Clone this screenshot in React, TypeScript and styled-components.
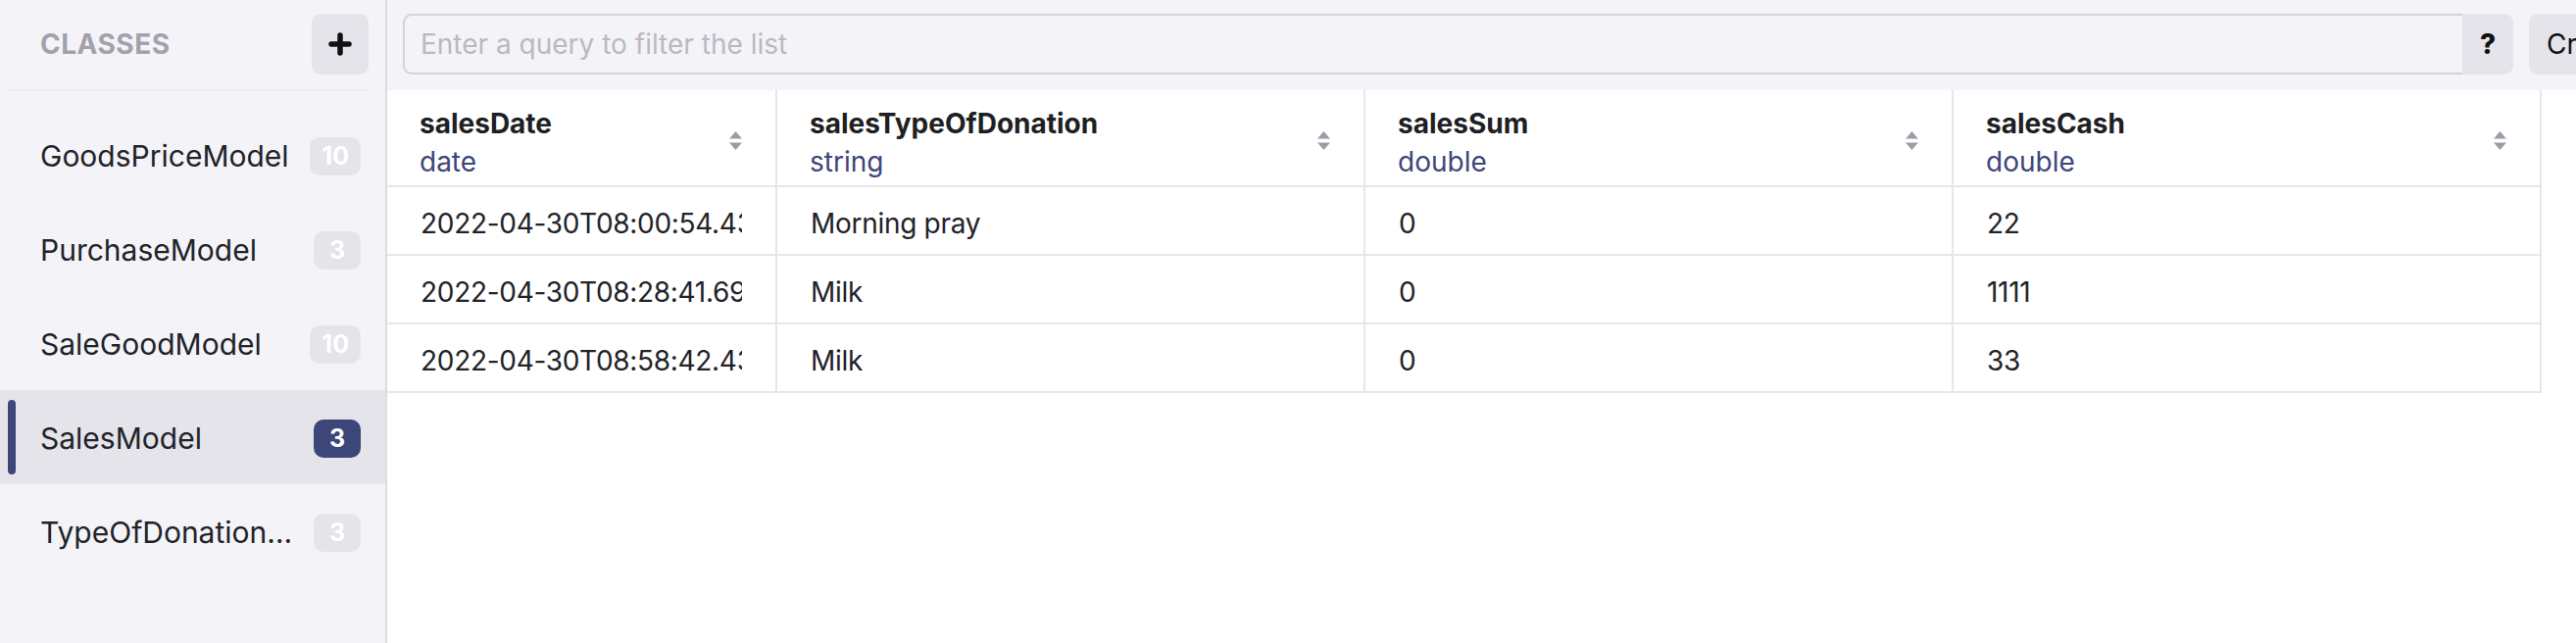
import React from 'react';
import styled, { createGlobalStyle } from 'styled-components';

const GlobalStyle = createGlobalStyle`
    html, body {
        margin: 0;
        padding: 0;
        background: #ffffff;
    }
    * {
        box-sizing: border-box;
    }
`;

const classes = [
    { name: 'GoodsPriceModel', count: 10 },
    { name: 'PurchaseModel', count: 3 },
    { name: 'SaleGoodModel', count: 10 },
    { name: 'SalesModel', count: 3, active: true },
    { name: 'TypeOfDonationModel', count: 3 },
];

const columns = [
    { name: 'salesDate', type: 'date' },
    { name: 'salesTypeOfDonation', type: 'string' },
    { name: 'salesSum', type: 'double' },
    { name: 'salesCash', type: 'double' },
];

const rows = [
    ['2022-04-30T08:00:54.432Z', 'Morning pray', '0', '22'],
    ['2022-04-30T08:28:41.695Z', 'Milk', '0', '1111'],
    ['2022-04-30T08:58:42.432Z', 'Milk', '0', '33'],
];

const SortIcon = () => (
    <svg width="15" height="21" viewBox="0 0 15 21">
        <path d="M7.5 1 L14 8.5 L1 8.5 Z" fill="#9c9ca8" />
        <path d="M1 12.5 L14 12.5 L7.5 20 Z" fill="#9c9ca8" />
    </svg>
);

const PlusIcon = () => (
    <svg width="24" height="24" viewBox="0 0 24 24">
        <path d="M12 3 V21 M3 12 H21" stroke="#111" strokeWidth="5.5" strokeLinecap="round" />
    </svg>
);

const App = () => {
    return (
        <>
            <GlobalStyle />
            <Page>
                <Sidebar>
                    <SidebarHeader>
                        <SidebarTitle>Classes</SidebarTitle>
                        <AddButton><PlusIcon /></AddButton>
                    </SidebarHeader>
                    <ClassList>
                        {classes.map((c) => (
                            <ClassRow key={c.name} $active={!!c.active}>
                                <Indicator $active={!!c.active} />
                                <ClassName>{c.name}</ClassName>
                                <Count $active={!!c.active}>{c.count}</Count>
                            </ClassRow>
                        ))}
                    </ClassList>
                </Sidebar>
                <Main>
                    <Toolbar>
                        <SearchGroup>
                            <SearchInput placeholder="Enter a query to filter the list" />
                            <HelpButton>?</HelpButton>
                        </SearchGroup>
                        <CreateButton>Create a class</CreateButton>
                    </Toolbar>
                    <Table>
                        {columns.map((col) => (
                            <HeadCell key={col.name}>
                                <HeadText>
                                    <ColName>{col.name}</ColName>
                                    <ColType>{col.type}</ColType>
                                </HeadText>
                                <SortIcon />
                            </HeadCell>
                        ))}
                        {rows.map((row, i) =>
                            row.map((value, j) => (
                                <Cell key={`${i}-${j}`}>
                                    <CellText>{value}</CellText>
                                </Cell>
                            ))
                        )}
                    </Table>
                </Main>
            </Page>
        </>
    );
};

export default App;

const Page = styled.div`
    display: flex;
    width: 100vw;
    height: 100vh;
    overflow: hidden;
    font-family: Inter, "Liberation Sans", sans-serif;
    color: #212329;
`;

const Sidebar = styled.aside`
    width: 395px;
    flex-shrink: 0;
    background: #f4f4f8;
    border-right: 2px solid #dcdce2;
    display: flex;
    flex-direction: column;
`;

const SidebarHeader = styled.div`
    height: 93px;
    margin: 0 17px 0 8px;
    padding: 14px 0 0 33px;
    display: flex;
    justify-content: space-between;
    align-items: flex-start;
    border-bottom: 2px solid #e9e9ee;
`;

const SidebarTitle = styled.div`
    font-size: 28px;
    font-weight: 700;
    letter-spacing: 0.5px;
    text-transform: uppercase;
    color: #a2a2ac;
    line-height: 62px;
`;

const AddButton = styled.div`
    width: 58px;
    height: 62px;
    border-radius: 9px;
    background: #e4e4ea;
    display: flex;
    align-items: center;
    justify-content: center;
`;

const ClassList = styled.div`
    display: flex;
    flex-direction: column;
    padding-top: 17px;
`;

const ClassRow = styled.div<{ $active: boolean }>`
    height: 96px;
    display: flex;
    align-items: center;
    padding: 2px 25px 0 8px;
    gap: 14px;
    background: ${(p) => (p.$active ? '#e4e4ea' : 'transparent')};
`;

const Indicator = styled.div<{ $active: boolean }>`
    width: 8px;
    align-self: stretch;
    margin: 8px 11px 10px 0;
    border-radius: 4px;
    flex-shrink: 0;
    background: ${(p) => (p.$active ? '#3d4679' : 'transparent')};
`;

const ClassName = styled.div`
    flex: 1;
    min-width: 0;
    font-size: 30px;
    white-space: nowrap;
    overflow: hidden;
    text-overflow: ellipsis;
    color: #212329;
`;

const Count = styled.div<{ $active: boolean }>`
    flex-shrink: 0;
    min-width: 48px;
    height: 39px;
    padding: 0 12px;
    border-radius: 10px;
    display: flex;
    align-items: center;
    justify-content: center;
    font-size: 25px;
    font-weight: 700;
    color: #ffffff;
    background: ${(p) => (p.$active ? '#3d4679' : '#e4e4ea')};
`;

const Main = styled.main`
    flex: 1;
    min-width: 0;
    display: flex;
    flex-direction: column;
    overflow: hidden;
    background: #ffffff;
`;

const Toolbar = styled.div`
    height: 92px;
    flex-shrink: 0;
    background: #f4f4f8;
    padding: 14px 0 0 16px;
    display: flex;
    align-items: flex-start;
    gap: 16px;
`;

const SearchGroup = styled.div`
    width: 2153px;
    height: 62px;
    flex-shrink: 0;
    display: flex;
`;

const SearchInput = styled.input`
    flex: 1;
    height: 100%;
    border: 2px solid #d2d2d9;
    border-right: none;
    border-radius: 9px 0 0 9px;
    background: #f4f4f8;
    padding: 0 16px;
    font-family: Inter, "Liberation Sans", sans-serif;
    font-size: 28px;
    color: #212329;
    outline: none;
    &::placeholder {
        color: #b9b9c2;
    }
`;

const HelpButton = styled.div`
    width: 52px;
    height: 100%;
    background: #e4e4ea;
    border-radius: 0 9px 9px 0;
    display: flex;
    align-items: center;
    justify-content: center;
    font-size: 28px;
    font-weight: 800;
    color: #111;
`;

const CreateButton = styled.div`
    flex-shrink: 0;
    height: 62px;
    padding: 0 18px;
    border-radius: 9px;
    background: #e4e4ea;
    display: flex;
    align-items: center;
    font-size: 28px;
    color: #111;
    white-space: nowrap;
`;

const Table = styled.div`
    display: grid;
    grid-template-columns: 398px 600px 600px 600px;
    width: max-content;
`;

const HeadCell = styled.div`
    height: 99px;
    padding: 11px 33px 0 33px;
    display: flex;
    justify-content: space-between;
    align-items: center;
    border-right: 2px solid #e6e6eb;
    border-bottom: 2px solid #e6e6eb;
    svg {
        flex-shrink: 0;
        margin-top: -6px;
    }
`;

const HeadText = styled.div`
    display: flex;
    flex-direction: column;
    min-width: 0;
`;

const ColName = styled.div`
    font-size: 28px;
    font-weight: 700;
    line-height: 38px;
    color: #1e1f24;
    white-space: nowrap;
`;

const ColType = styled.div`
    font-size: 28px;
    line-height: 40px;
    color: #3d4679;
`;

const Cell = styled.div`
    height: 70px;
    padding: 6px 34px 0 34px;
    display: flex;
    align-items: center;
    border-right: 2px solid #e6e6eb;
    border-bottom: 2px solid #e6e6eb;
`;

const CellText = styled.div`
    font-size: 28px;
    letter-spacing: -0.3px;
    white-space: nowrap;
    overflow: hidden;
    color: #212329;
`;
